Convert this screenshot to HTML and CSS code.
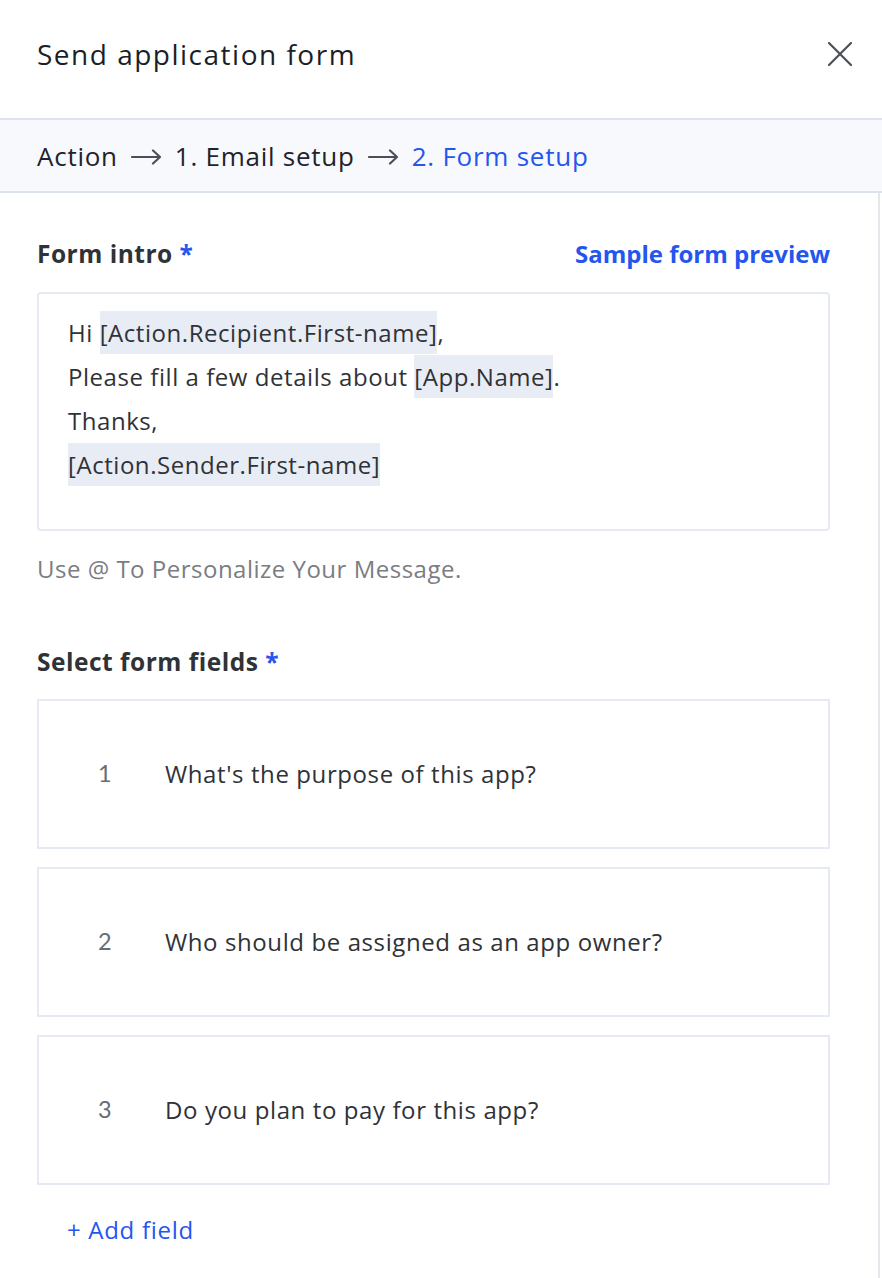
FILE: index.html
```html
<!DOCTYPE html>
<html>
<head>
<meta charset="utf-8">
<link rel="stylesheet" href="styles.css">
</head>
<body>
<div class="panel">
  <header class="header">
    <h1 class="title">Send application form</h1>
    <button class="close" aria-label="Close">
      <svg width="26" height="26" viewBox="0 0 26 26"><path d="M2 2 L24 24 M24 2 L2 24" stroke="#4b5058" stroke-width="2.2" stroke-linecap="round" fill="none"/></svg>
    </button>
  </header>
  <nav class="crumbs">
    <span>Action</span>
    <svg class="arrow" width="31" height="16" viewBox="0 0 31 16"><path d="M1 8 H29 M22 1.5 L29 8 L22 14.5" stroke="#4b5058" stroke-width="2.2" fill="none" stroke-linecap="round" stroke-linejoin="round"/></svg>
    <span>1. Email setup</span>
    <svg class="arrow" width="31" height="16" viewBox="0 0 31 16"><path d="M1 8 H29 M22 1.5 L29 8 L22 14.5" stroke="#4b5058" stroke-width="2.2" fill="none" stroke-linecap="round" stroke-linejoin="round"/></svg>
    <span class="active">2. Form setup</span>
  </nav>
  <main class="body">
    <div class="label-row">
      <div class="label">Form intro <span class="req">*</span></div>
      <a class="preview">Sample form preview</a>
    </div>
    <div class="intro-box">
      <div class="line">Hi <span class="tag">[Action.Recipient.First-name]</span>,</div>
      <div class="line">Please fill a few details about <span class="tag">[App.Name]</span>.</div>
      <div class="line">Thanks,</div>
      <div class="line"><span class="tag">[Action.Sender.First-name]</span></div>
    </div>
    <div class="hint">Use @ To Personalize Your Message.</div>

    <div class="label fields-label">Select form fields <span class="req">*</span></div>
    <div class="fields">
      <div class="field"><span class="num">1</span><span class="q">What's the purpose of this app?</span></div>
      <div class="field"><span class="num">2</span><span class="q">Who should be assigned as an app owner?</span></div>
      <div class="field"><span class="num">3</span><span class="q">Do you plan to pay for this app?</span></div>
    </div>
    <a class="add">+ Add field</a>
  </main>
</div>
</body>
</html>
```
FILE: styles.css
```css
* { box-sizing: border-box; }
html, body { margin: 0; padding: 0; background: #fff; }
body {
  font-family: "Open Sans", "Noto Sans", sans-serif;
  color: #2b2f36;
  width: 882px;
  height: 1278px;
  overflow: hidden;
}
.panel { display: flex; flex-direction: column; height: 1278px; }
.header {
  height: 118px;
  display: flex;
  align-items: center;
  justify-content: space-between;
  padding: 0 29px 10px 37px;
}
.title {
  margin: 0;
  font-size: 28px;
  font-weight: 500;
  color: #1b1f27;
  letter-spacing: 1.5px;
}
.close {
  border: 0;
  background: none;
  padding: 0;
  width: 26px;
  height: 26px;
  display: flex;
}
.crumbs {
  height: 75px;
  background: #f7f9fc;
  border-top: 2px solid #dde3ea;
  border-bottom: 2px solid #dde3ea;
  display: flex;
  align-items: center;
  gap: 13px;
  padding: 0 37px;
  font-size: 26px;
  letter-spacing: 0.75px;
  color: #1f232b;
}
.crumbs .arrow { flex: none; margin-top: 2px; }
.crumbs .active { color: #2456ef; }
.body {
  flex: 1;
  border-right: 2px solid #e4e7eb;
  margin-right: 2px;
  padding: 44px 48px 0 37px;
}
.label-row {
  display: flex;
  justify-content: space-between;
  align-items: center;
}
.label {
  font-size: 24.5px;
  font-weight: 700;
  letter-spacing: 0.5px;
  color: #2f3237;
}
.req { color: #2456ef; }
.preview {
  font-size: 24px;
  font-weight: 700;
  color: #2456ef;
}
.intro-box {
  margin-top: 22px;
  height: 239px;
  border: 2px solid #e6ebf3;
  border-radius: 4px;
  padding: 17px 29px;
  font-size: 24px;
  letter-spacing: 0.55px;
  color: #2f3237;
}
.line { line-height: 44px; height: 44px; }
.tag { background: #e8ecf4; padding: 5px 0; }
.hint {
  margin-top: 21px;
  font-size: 24px;
  letter-spacing: 0.5px;
  color: #7a7d82;
}
.fields-label { margin-top: 60px; }
.fields {
  margin-top: 21px;
  display: flex;
  flex-direction: column;
  gap: 18px;
}
.field {
  height: 150px;
  border: 2px solid #e6ebf3;
  display: flex;
  align-items: center;
  padding: 0 0 2px 59px;
  font-size: 24px;
  letter-spacing: 0.6px;
  color: #2f3237;
}
.num {
  width: 67px;
  font-family: "Lato", sans-serif;
  font-size: 23.5px;
  color: #696d73;
}
.add {
  display: inline-block;
  margin-top: 28px;
  margin-left: 30px;
  font-size: 24px;
  letter-spacing: 0.7px;
  color: #2456ef;
}
```
